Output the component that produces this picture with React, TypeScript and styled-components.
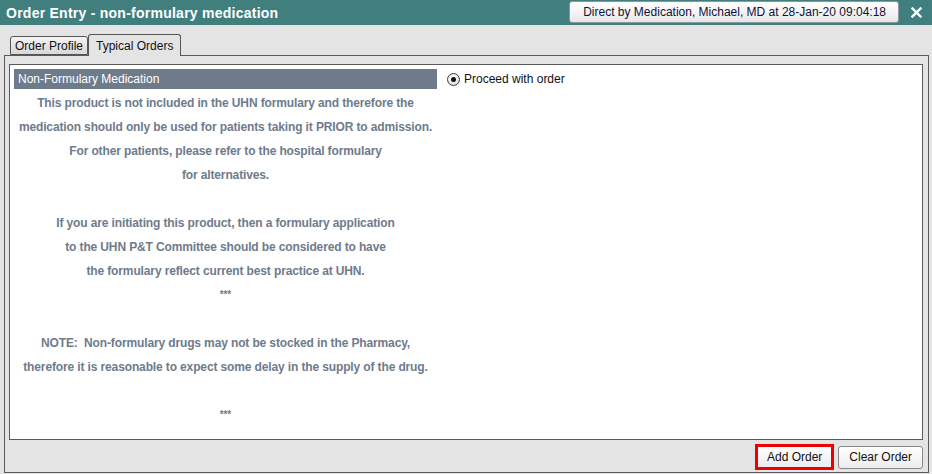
import * as React from "react";
import styled, { createGlobalStyle } from "styled-components";

const GlobalStyle = createGlobalStyle`
  html, body {
    margin: 0;
    padding: 0;
    background: #e4e4e4;
  }
  body {
    font-family: "Liberation Sans", Arial, sans-serif;
  }
`;

const MESSAGE_LINES: string[] = [
  "This product is not included in the UHN formulary and therefore the",
  "medication should only be used for patients taking it PRIOR to admission.",
  "For other patients, please refer to the hospital formulary",
  "for alternatives.",
  "",
  "If you are initiating this product, then a formulary application",
  "to the UHN P&T Committee should be considered to have",
  "the formulary reflect current best practice at UHN.",
  "***",
  "",
  "NOTE:  Non-formulary drugs may not be stocked in the Pharmacy,",
  "therefore it is reasonable to expect some delay in the supply of the drug.",
  "",
  "***",
];

const TABS = ["Order Profile", "Typical Orders"];

const App: React.FC = () => {
  const [activeTab, setActiveTab] = React.useState(1);
  const [proceed, setProceed] = React.useState(true);

  return (
    <Window>
      <GlobalStyle />
      <TitleBar>
        <Title>Order Entry - non-formulary medication</Title>
        <TitleActions>
          <ContextButton>Direct by Medication, Michael, MD at 28-Jan-20 09:04:18</ContextButton>
          <CloseButton aria-label="Close">
            <svg width="11" height="11" viewBox="0 0 11 11">
              <path d="M1.5 1.5 L9.5 9.5 M9.5 1.5 L1.5 9.5" stroke="#fff" strokeWidth="2.4" strokeLinecap="square" />
            </svg>
          </CloseButton>
        </TitleActions>
      </TitleBar>

      <Body>
        <TabStrip>
          {TABS.map((tab, index) => (
            <Tab key={tab} $active={index === activeTab} onClick={() => setActiveTab(index)}>
              {tab}
            </Tab>
          ))}
        </TabStrip>

        <TabPanel>
          <Content>
            <MessageColumn>
              <SectionHeader>Non-Formulary Medication</SectionHeader>
              {MESSAGE_LINES.map((line, index) => (
                <MessageLine key={index} $small={line === "***"}>
                  {line || "\u00a0"}
                </MessageLine>
              ))}
            </MessageColumn>
            <OptionColumn>
              <RadioRow onClick={() => setProceed(true)}>
                <RadioCircle $checked={proceed} />
                <RadioLabel>Proceed with order</RadioLabel>
              </RadioRow>
            </OptionColumn>
          </Content>

          <Footer>
            <FooterButton $highlight>Add Order</FooterButton>
            <FooterButton>Clear Order</FooterButton>
          </Footer>
        </TabPanel>
      </Body>
    </Window>
  );
};

export default App;

const Window = styled.div`
  width: 932px;
  height: 474px;
  display: flex;
  flex-direction: column;
  background: #e4e4e4;
  overflow: hidden;
`;

const TitleBar = styled.div`
  height: 25px;
  flex-shrink: 0;
  display: flex;
  align-items: center;
  justify-content: space-between;
  background: #417f7f;
  padding: 0 9px 0 6px;
`;

const Title = styled.div`
  color: #ffffff;
  font-size: 14px;
  font-weight: bold;
  letter-spacing: 0.25px;
`;

const TitleActions = styled.div`
  display: flex;
  align-items: center;
  gap: 11px;
`;

const ContextButton = styled.button`
  height: 22px;
  margin-top: -1px;
  border: 1px solid #8a9a9a;
  border-radius: 3px;
  background: linear-gradient(#ffffff, #f2f2f4 60%, #e6e6ea);
  font-family: "Liberation Sans", Arial, sans-serif;
  font-size: 12px;
  white-space: nowrap;
  color: #111133;
  padding: 0 12px 0 13px;
  cursor: default;
`;

const CloseButton = styled.button`
  display: flex;
  align-items: center;
  justify-content: center;
  width: 13px;
  height: 13px;
  padding: 0;
  border: none;
  background: transparent;
  cursor: default;
`;

const Body = styled.div`
  flex: 1;
  display: flex;
  flex-direction: column;
  padding: 8px 3px 1px 4px;
`;

const TabStrip = styled.div`
  display: flex;
  align-items: flex-end;
  height: 22px;
  padding-left: 6px;
`;

const Tab = styled.div<{ $active?: boolean }>`
  height: ${(p) => (p.$active ? "22px" : "19px")};
  box-sizing: border-box;
  display: flex;
  align-items: center;
  padding: 0 ${(p) => (p.$active ? "7px" : "4px")};
  margin-bottom: ${(p) => (p.$active ? "-1px" : "0")};
  border: 1px solid #555;
  border-bottom: ${(p) => (p.$active ? "none" : "1px solid #555")};
  border-radius: 3px 3px 0 0;
  background: ${(p) => (p.$active ? "#e4e4e4" : "linear-gradient(#f4f4f4, #d8d8d8)")};
  font-size: 12px;
  color: #111;
  position: relative;
  z-index: ${(p) => (p.$active ? 1 : 0)};
  cursor: default;
`;

const TabPanel = styled.div`
  flex: 1;
  display: flex;
  flex-direction: column;
  border: 1px solid #5a5a5a;
  padding: 8px 5px 0 4px;
`;

const Content = styled.div`
  flex: 1;
  display: flex;
  gap: 10px;
  background: #ffffff;
  border: 1px solid #5a5a5a;
  padding: 4px;
`;

const MessageColumn = styled.div`
  width: 423px;
  display: flex;
  flex-direction: column;
`;

const SectionHeader = styled.div`
  height: 20px;
  display: flex;
  align-items: center;
  padding-left: 4px;
  background: #6e7b8b;
  color: #ffffff;
  font-size: 12px;
  margin-bottom: 2px;
`;

const MessageLine = styled.div<{ $small?: boolean }>`
  height: 24px;
  line-height: 24px;
  text-align: center;
  color: #6e7b8b;
  font-size: ${(p) => (p.$small ? "10px" : "12px")};
  font-weight: bold;
  letter-spacing: -0.13px;
  white-space: pre;
`;

const OptionColumn = styled.div`
  flex: 1;
  display: flex;
  flex-direction: column;
  padding-top: 2px;
`;

const RadioRow = styled.div`
  display: flex;
  align-items: center;
  gap: 4px;
  height: 16px;
  cursor: default;
`;

const RadioCircle = styled.span<{ $checked?: boolean }>`
  width: 11px;
  height: 11px;
  border-radius: 50%;
  border: 1px solid #3a3a3a;
  background: radial-gradient(circle at 40% 35%, #ffffff, #d6d6dc);
  display: flex;
  align-items: center;
  justify-content: center;

  &::after {
    content: "";
    width: 5px;
    height: 5px;
    border-radius: 50%;
    background: ${(p) => (p.$checked ? "#111" : "transparent")};
  }
`;

const RadioLabel = styled.span`
  font-size: 12px;
  color: #111;
`;

const Footer = styled.div`
  height: 32px;
  display: flex;
  align-items: center;
  justify-content: flex-end;
  gap: 4px;
  padding-top: 2px;
  box-sizing: border-box;
`;

const FooterButton = styled.button<{ $highlight?: boolean }>`
  height: ${(p) => (p.$highlight ? "26px" : "23px")};
  box-sizing: border-box;
  padding: 0 ${(p) => (p.$highlight ? "9px" : "10px")};
  border: ${(p) => (p.$highlight ? "3px solid #ee0000" : "1px solid #888")};
  border-radius: ${(p) => (p.$highlight ? "0" : "3px")};
  background: linear-gradient(#ffffff, #ececf0);
  font-family: "Liberation Sans", Arial, sans-serif;
  font-size: 12px;
  color: #111;
  cursor: default;
`;
